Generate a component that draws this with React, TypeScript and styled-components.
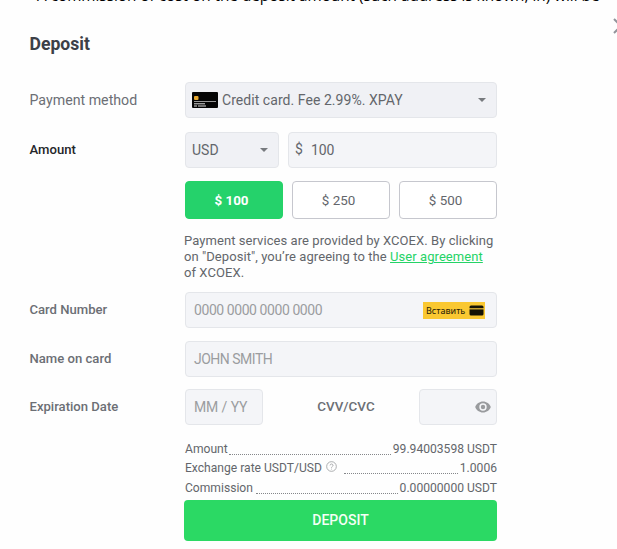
import React from "react";
import styled, { createGlobalStyle } from "styled-components";

const GlobalStyle = createGlobalStyle`
  *, *::before, *::after { box-sizing: border-box; }
  body {
    margin: 0;
    background: #fefefe;
    color: #63666b;
    font-family: Roboto, "Liberation Sans", sans-serif;
    overflow: hidden;
  }
`;

const Page = styled.div`
  width: 617px;
  height: 549px;
  overflow: hidden;
`;

const Notice = styled.div`
  height: 18px;
  padding-left: 37px;
  white-space: nowrap;
  color: #000;
  font: 15.3px/18px "Open Sans", sans-serif;
  margin-top: -14px;
`;

const Header = styled.header`
  display: flex;
  justify-content: space-between;
  height: 78px;
  padding: 13px 0 0 29.5px;
`;

const Title = styled.h1`
  margin: 17px 0 0;
  color: #3c4047;
  font-size: 17.6px;
  line-height: 20px;
  font-weight: 700;
`;

const CloseClip = styled.div`
  width: 4px;
  height: 20px;
  overflow: hidden;
  svg { display: block; }
`;

const Row = styled.div<{ $gap: number }>`
  display: grid;
  grid-template-columns: 155.5px 312px;
  align-items: center;
  margin: 0 0 ${(p) => p.$gap}px 29.5px;
`;

const Label = styled.label<{ $dark?: boolean; $size?: number; $weight?: number }>`
  color: ${(p) => (p.$dark ? "#24262a" : "#6c6f75")};
  font-size: ${(p) => p.$size ?? 13.1}px;
  font-weight: ${(p) => p.$weight ?? 500};
  line-height: 18px;
`;

const CodeLabel = styled(Label)`
  padding-left: 10px;
`;

const Field = styled.div<{ $width?: number; $select?: boolean; $hint?: boolean }>`
  display: flex;
  align-items: center;
  width: ${(p) => p.$width ?? 312}px;
  height: 36px;
  padding: 0 ${(p) => (p.$select ? "10px 0 6px" : "11px 0 8px")};
  border: 1px solid #e4e6ea;
  border-radius: 4px;
  background: ${(p) => (p.$select ? "#f0f1f5" : "#f4f5f8")};
  color: ${(p) => (p.$hint ? "#9b9da0" : "#63666b")};
  font-size: 14px;
  white-space: nowrap;
  > :last-child:not(:first-child) { margin-left: auto; }
`;

const CodeField = styled(Field)`
  padding-right: 5px;
`;

const FieldText = styled.span<{ $left?: number; $spacing?: number }>`
  margin-left: ${(p) => p.$left ?? 0}px;
  letter-spacing: ${(p) => p.$spacing ?? 0}px;
`;

const AmountText = styled.div`
  display: flex;
  gap: 8px;
  margin-left: -2px;
  span:first-child { line-height: 15px; }
`;

const Caret = styled.i`
  border: 4px solid transparent;
  border-top: 4px solid #777a7e;
  border-bottom: 0;
`;

const Split = styled.div`
  display: flex;
  align-items: center;
  justify-content: space-between;
`;

const Presets = styled.div`
  display: flex;
  justify-content: space-between;
  width: 312px;
  margin: 0 0 14px 185px;
`;

const Preset = styled.button<{ $active?: boolean }>`
  width: 98px;
  height: 38px;
  padding: 0 5px 0 0;
  border: 1px solid ${(p) => (p.$active ? "#25d366" : "#c6c7ce")};
  border-radius: 4px;
  background: ${(p) => (p.$active ? "#25d26b" : "#fff")};
  color: ${(p) => (p.$active ? "#fff" : "#63666b")};
  font: ${(p) => (p.$active ? 700 : 400)} 13.4px Roboto, sans-serif;
`;

const Terms = styled.p`
  width: 320px;
  height: 48px;
  margin: 0 0 11px 184px;
  font-size: 13px;
  line-height: 16px;
  letter-spacing: 0.07px;
  white-space: nowrap;
`;

const Agreement = styled.span`
  color: #25d366;
  text-decoration: underline;
`;

const Insert = styled.button`
  display: flex;
  align-items: center;
  justify-content: space-between;
  width: 62px;
  height: 17px;
  padding: 0 1px 0 3px;
  border: 0;
  background: #fac832;
  color: #282208;
  font: 9px "Noto Sans", sans-serif;
`;

const Summary = styled.dl`
  width: 312px;
  margin: 0 0 2px 185px;
`;

const SummaryRow = styled.div`
  display: flex;
  align-items: center;
  height: 19.5px;
  font-size: 12.1px;
  line-height: 16px;
  dt, dd { margin: 0; white-space: nowrap; }
  dt { display: flex; align-items: center; }
`;

const Leader = styled.span<{ $left: number }>`
  flex: 1;
  align-self: flex-end;
  margin: 0 2px 4px ${(p) => p.$left}px;
  border-bottom: 1px dotted #85878a;
`;

const Submit = styled.button`
  display: block;
  width: 313px;
  height: 41px;
  margin-left: 184px;
  padding: 0;
  border: 0;
  border-radius: 4px;
  background: #2bd964;
  color: #f5fff5;
  font: 500 14px Roboto, sans-serif;
`;

const CardImage = () => (
  <svg width="26" height="16" viewBox="0 0 26 16">
    <rect width="26" height="16" rx="1" fill="#050505" />
    <rect x="2" y="4" width="4.5" height="4" rx="1" fill="#e5a72f" />
    <path d="M2 9.5h22" stroke="#999" />
    <path d="M2 11.8h11M2 14h3M6 14h8" stroke="#ddd" />
  </svg>
);

const SmallCard = () => (
  <svg width="15" height="11" viewBox="0 0 15 11">
    <rect x=".5" y=".5" width="14" height="10" rx="1.5" fill="#151204" />
    <path d="M0 3.8h15" stroke="#f1c33b" strokeWidth="1.2" />
  </svg>
);

const Eye = () => (
  <svg width="16" height="12" viewBox="0 0 16 12">
    <path fillRule="evenodd" fill="#999b9e" d="M8 .5C4.4.5 1.4 2.8.2 6c1.2 3.2 4.2 5.5 7.8 5.5s6.6-2.3 7.8-5.5C14.6 2.8 11.6.5 8 .5Zm0 9.2a3.7 3.7 0 1 1 0-7.4 3.7 3.7 0 0 1 0 7.4Z" />
    <circle cx="8" cy="6" r="2.2" fill="#999b9e" />
  </svg>
);

const HelpIcon = styled.svg`
  margin: -3px 0 0 4px;
`;

const Help = () => (
  <HelpIcon width="11" height="11" viewBox="0 0 10 10" fill="none" stroke="#96989b" strokeWidth=".7">
    <circle cx="5" cy="5" r="4.4" />
    <path d="M3.7 4c0-1.7 2.7-1.7 2.7 0C6.4 5 5 5 5 6.1M5 7v.7" />
  </HelpIcon>
);

export default function App() {
  return (
    <Page>
      <GlobalStyle />
      <Notice>A commission of cost on the deposit amount (such address is known, in) will be</Notice>
      <Header>
        <Title>Deposit</Title>
        <CloseClip>
          <svg width="18" height="20" viewBox="0 0 18 20">
            <path d="m1 2 14 14M1 16 15 2" fill="none" stroke="#92949b" strokeWidth="2" />
          </svg>
        </CloseClip>
      </Header>
      <Row $gap={14}>
        <Label $size={14.2} $weight={400}>Payment method</Label>
        <Field $select>
          <CardImage />
          <FieldText $left={4} $spacing={0.05}>Credit card. Fee 2.99%. XPAY</FieldText>
          <Caret />
        </Field>
      </Row>
      <Row $gap={13}>
        <Label $dark>Amount</Label>
        <Split>
          <Field $width={94} $select><FieldText>USD</FieldText><Caret /></Field>
          <Field $width={209}><AmountText><span>$</span><span>100</span></AmountText></Field>
        </Split>
      </Row>
      <Presets>
        <Preset $active>$ 100</Preset>
        <Preset>$ 250</Preset>
        <Preset>$ 500</Preset>
      </Presets>
      <Terms>
        Payment services are provided by XCOEX. By clicking<br />
        on "Deposit", you’re agreeing to the <Agreement>User agreement</Agreement><br />
        of XCOEX.
      </Terms>
      <Row $gap={13}>
        <Label>Card Number</Label>
        <Field $hint><FieldText $spacing={-0.43}>0000 0000 0000 0000</FieldText><Insert>Вставить <SmallCard /></Insert></Field>
      </Row>
      <Row $gap={12}>
        <Label>Name on card</Label>
        <Field $hint><FieldText $spacing={-0.5}>JOHN SMITH</FieldText></Field>
      </Row>
      <Row $gap={14}>
        <Label>Expiration Date</Label>
        <Split>
          <Field $width={78} $hint><FieldText $spacing={-0.1}>MM / YY</FieldText></Field>
          <CodeLabel $size={13.4}>CVV/CVC</CodeLabel>
          <CodeField $width={78} $hint><span /><Eye /></CodeField>
        </Split>
      </Row>
      <Summary>
        <SummaryRow><dt>Amount</dt><Leader $left={1} /><dd>99.94003598 USDT</dd></SummaryRow>
        <SummaryRow><dt>Exchange rate USDT/USD <Help /></dt><Leader $left={7} /><dd>1.0006</dd></SummaryRow>
        <SummaryRow><dt>Commission</dt><Leader $left={3} /><dd>0.00000000 USDT</dd></SummaryRow>
      </Summary>
      <Submit>DEPOSIT</Submit>
    </Page>
  );
}
